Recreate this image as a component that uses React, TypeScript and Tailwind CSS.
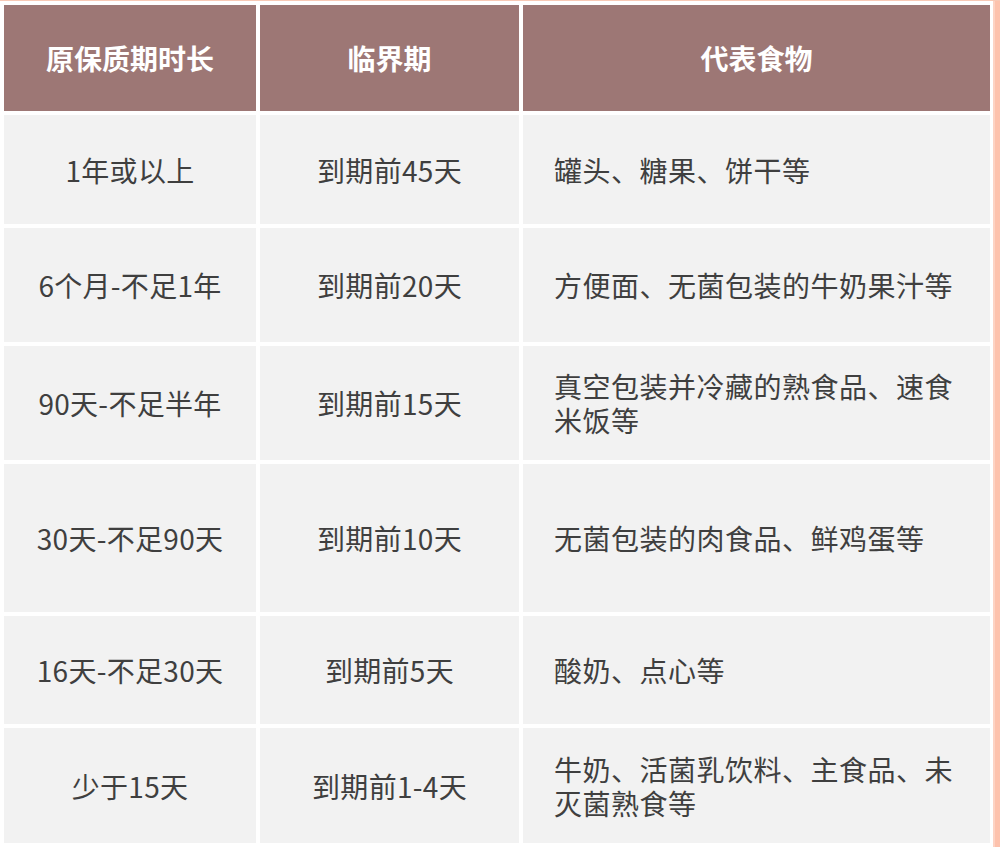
import React from 'react';

const rows: [string, string, string][] = [
  ['1年或以上', '到期前45天', '罐头、糖果、饼干等'],
  ['6个月-不足1年', '到期前20天', '方便面、无菌包装的牛奶果汁等'],
  ['90天-不足半年', '到期前15天', '真空包装并冷藏的熟食品、速食米饭等'],
  ['30天-不足90天', '到期前10天', '无菌包装的肉食品、鲜鸡蛋等'],
  ['16天-不足30天', '到期前5天', '酸奶、点心等'],
  ['少于15天', '到期前1-4天', '牛奶、活菌乳饮料、主食品、未灭菌熟食等'],
];

export default function App() {
  return (
    <div
      className="w-[1000px] h-[847px] bg-white border-t border-[#f8c9b6] flex overflow-hidden"
      style={{ fontFamily: '"Noto Sans CJK SC", "Noto Sans", sans-serif' }}
    >
      <div className="flex-1 pl-[4px] pt-[4px]">
        <div className="grid grid-cols-[252px_259px_467px] grid-rows-[106px_109px_114px_114px_148px_108px_115px] gap-[4px]">
          {/* header */}
          <div className="bg-[#9d7775] text-white font-bold text-[28px] flex items-center justify-center">原保质期时长</div>
          <div className="bg-[#9d7775] text-white font-bold text-[28px] flex items-center justify-center">临界期</div>
          <div className="bg-[#9d7775] text-white font-bold text-[28px] flex items-center justify-center">代表食物</div>

          {rows.map(([a, b, c]) => (
            <React.Fragment key={a}>
              <div className="bg-[#f2f2f2] text-[#3f3f3f] text-[28px] tracking-[0.3px] flex items-center justify-center">{a}</div>
              <div className="bg-[#f2f2f2] text-[#3f3f3f] text-[28px] tracking-[0.3px] flex items-center justify-center">{b}</div>
              <div className="bg-[#f2f2f2] text-[#3f3f3f] text-[28px] leading-[34px] tracking-[0.5px] flex items-center pl-[31px] pr-[25px]">
                <p>{c}</p>
              </div>
            </React.Fragment>
          ))}
        </div>
      </div>
      <div className="w-[3px] bg-white" />
      <div className="w-[7px] bg-[#fdc2ad] border-l-2 border-[#fdd3c4]" />
    </div>
  );
}
